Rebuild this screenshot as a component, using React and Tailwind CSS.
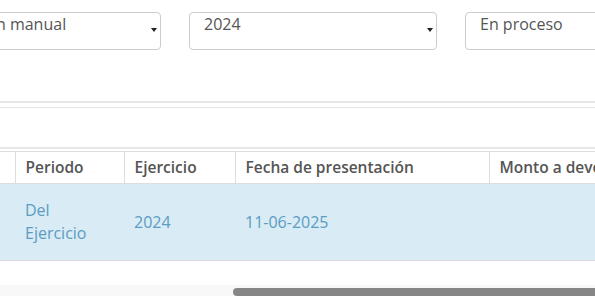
import React from 'react';

const COLS = [
  { key: 'pre', label: '', w: 15 },
  { key: 'periodo', label: 'Periodo', w: 109 },
  { key: 'ejercicio', label: 'Ejercicio', w: 111 },
  { key: 'fecha', label: 'Fecha de presentación', w: 254 },
  { key: 'monto', label: 'Monto a devolver', w: 211 },
];

function Select({ value, pad = 'pl-[14px]' }) {
  return (
    <div className="relative w-[248px] h-[38px] shrink-0 border border-[#cccccc] rounded-[4px] bg-white">
      <span className={`block ${pad} pt-[1px] text-[16px] leading-[21px] text-[#555555] whitespace-nowrap`}>{value}</span>
      <span className="absolute right-[3px] top-[15px] w-0 h-0 border-l-[3px] border-r-[3px] border-t-[4px] border-l-transparent border-r-transparent border-t-[#222222]" />
    </div>
  );
}

export default function App() {
  return (
    <div style={{ fontFamily: "'Open Sans', 'Noto Sans', sans-serif" }} className="relative w-[595px] h-[296px] overflow-hidden bg-white">
      {/* Filters */}
      <div className="flex gap-[28px] pt-[12px] -ml-[87px]">
        <Select value="Declaración manual" pad="pl-[4px]" />
        <Select value="2024" />
        <Select value="En proceso" />
      </div>

      <div className="mt-[51px] h-[2px] bg-[#e6e6e6]" />
      <div className="mt-[4px] h-[42px] border-t border-b-2 border-[#e6e6e6]" />

      {/* Table */}
      <div className="mt-[2px]">
        <table className="table-fixed border-collapse w-[700px]">
          <colgroup>
            {COLS.map((c) => <col key={c.key} style={{ width: c.w }} />)}
          </colgroup>
          <thead>
            <tr className="h-[32px]">
              {COLS.map((c, i) => (
                <th key={c.key} className={`text-left text-[15.5px] font-semibold text-[#555555] px-[10px] border-t border-b border-[#dddddd] whitespace-nowrap ${i > 0 ? 'border-l' : ''}`}>{c.label}</th>
              ))}
            </tr>
          </thead>
          <tbody>
            <tr className="h-[77px] bg-[#d9ebf4] text-[16px] text-[#5b9cc3] border-b border-[#dcdcdc]">
              <td />
              <td className="px-[10px] leading-[23px]">Del<br />Ejercicio</td>
              <td className="px-[10px]">2024</td>
              <td className="px-[10px]">11-06-2025</td>
              <td className="px-[10px]" />
            </tr>
          </tbody>
        </table>
      </div>

      {/* Horizontal scrollbar */}
      <div className="absolute left-0 right-0 top-[285px] h-[11px] bg-[#f8f8f8]">
        <div className="absolute left-[233px] -right-[20px] top-[3px] h-[8px] rounded-full bg-[#868686]" />
      </div>
    </div>
  );
}
